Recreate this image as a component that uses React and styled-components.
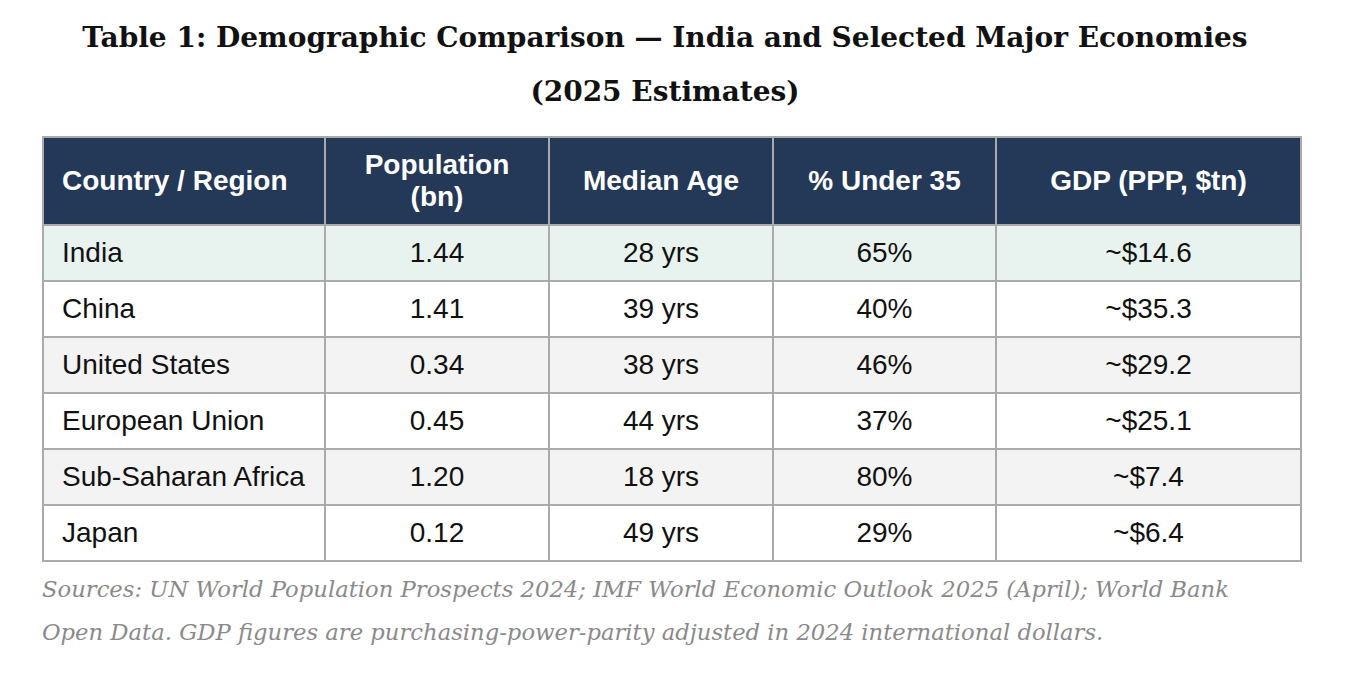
import React from "react";
import styled, { createGlobalStyle } from "styled-components";

const Global = createGlobalStyle`
  html, body { margin: 0; padding: 0; background: #ffffff; }
  body { font-family: "Liberation Sans", Arial, sans-serif; }
`;

const Page = styled.div`
  width: 1260px;
  padding: 11px 0 0 42px;
`;

const Title = styled.h2`
  margin: 0 0 17px;
  padding-right: 14px;
  text-align: center;
  font-family: "DejaVu Serif", Georgia, serif;
  font-weight: 700;
  font-size: 28px;
  line-height: 54px;
  color: #111111;
`;

const Table = styled.table`
  width: 1260px;
  table-layout: fixed;
  border-collapse: collapse;
  border: 2px solid #aaaaaa;
  font-family: "Liberation Sans", Arial, sans-serif;
  font-size: 28px;
  line-height: 32px;
`;

const HeadCell = styled.th`
  background: #243858;
  color: #ffffff;
  font-weight: 700;
  border: 2px solid #aaaaaa;
  padding: 11px 18px;
  text-align: ${(p) => (p.$left ? "left" : "center")};
  vertical-align: middle;
`;

const Row = styled.tr`
  background: ${(p) => p.$bg};
`;

const Cell = styled.td`
  border: 2px solid #aaaaaa;
  padding: 11px 18px;
  color: #111111;
  text-align: ${(p) => (p.$left ? "left" : "center")};
  vertical-align: middle;
`;

const Caption = styled.p`
  margin: 6px 0 0;
  font-family: "DejaVu Serif", Georgia, serif;
  font-style: italic;
  font-size: 22.7px;
  line-height: 43px;
  color: #8a8a8a;
`;

const cols = [282, 224, 224, 223, 305];

const rows = [
  ["India", "1.44", "28 yrs", "65%", "~$14.6"],
  ["China", "1.41", "39 yrs", "40%", "~$35.3"],
  ["United States", "0.34", "38 yrs", "46%", "~$29.2"],
  ["European Union", "0.45", "44 yrs", "37%", "~$25.1"],
  ["Sub-Saharan Africa", "1.20", "18 yrs", "80%", "~$7.4"],
  ["Japan", "0.12", "49 yrs", "29%", "~$6.4"],
];

const rowBg = (i) => (i === 0 ? "#e8f3ef" : i % 2 === 0 ? "#f3f3f3" : "#ffffff");

export default function App() {
  return (
    <>
      <Global />
      <Page>
        <Title>
          Table 1: Demographic Comparison — India and Selected Major Economies
          <br />
          (2025 Estimates)
        </Title>
        <Table>
          <colgroup>
            {cols.map((w, i) => (
              <col key={i} style={{ width: w }} />
            ))}
          </colgroup>
          <thead>
            <tr>
              <HeadCell $left>Country / Region</HeadCell>
              <HeadCell>
                Population
                <br />
                (bn)
              </HeadCell>
              <HeadCell>Median Age</HeadCell>
              <HeadCell>% Under 35</HeadCell>
              <HeadCell>GDP (PPP, $tn)</HeadCell>
            </tr>
          </thead>
          <tbody>
            {rows.map((r, i) => (
              <Row key={r[0]} $bg={rowBg(i)}>
                {r.map((c, j) => (
                  <Cell key={j} $left={j === 0}>
                    {c}
                  </Cell>
                ))}
              </Row>
            ))}
          </tbody>
        </Table>
        <Caption>
          Sources: UN World Population Prospects 2024; IMF World Economic Outlook 2025 (April); World Bank
          <br />
          Open Data. GDP figures are purchasing-power-parity adjusted in 2024 international dollars.
        </Caption>
      </Page>
    </>
  );
}
